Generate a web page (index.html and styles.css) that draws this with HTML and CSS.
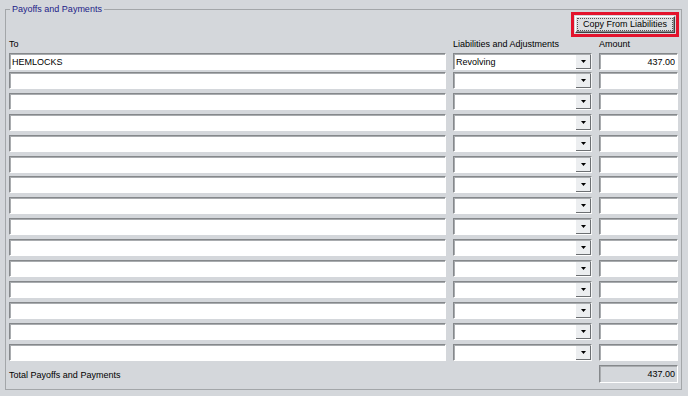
FILE: index.html
```html
<!DOCTYPE html>
<html>
<head>
    <title>Payoffs and Payments</title>
    <link rel="stylesheet" href="styles.css">
</head>
<body>
    <fieldset class="group">
        <legend>Payoffs and Payments</legend>

        <div class="toolbar">
            <button type="button" class="copy-btn"><span>Copy From Liabilities</span></button>
        </div>

        <div class="cols head">
            <div>To</div>
            <div>Liabilities and Adjustments</div>
            <div>Amount</div>
        </div>

        <div class="rows">
            <div class="cols row first">
                <input class="field" type="text" value="HEMLOCKS">
                <div class="field combo"><span class="val">Revolving</span><span class="arrow"><svg width="5" height="3" viewBox="0 0 5 3"><polygon points="0,0 5,0 2.5,3" fill="#000"/></svg></span></div>
                <input class="field amount" type="text" value="437.00">
            </div>
            <div class="cols row">
                <input class="field" type="text">
                <div class="field combo"><span class="val"></span><span class="arrow"><svg width="5" height="3" viewBox="0 0 5 3"><polygon points="0,0 5,0 2.5,3" fill="#000"/></svg></span></div>
                <input class="field amount" type="text">
            </div>
            <div class="cols row">
                <input class="field" type="text">
                <div class="field combo"><span class="val"></span><span class="arrow"><svg width="5" height="3" viewBox="0 0 5 3"><polygon points="0,0 5,0 2.5,3" fill="#000"/></svg></span></div>
                <input class="field amount" type="text">
            </div>
            <div class="cols row">
                <input class="field" type="text">
                <div class="field combo"><span class="val"></span><span class="arrow"><svg width="5" height="3" viewBox="0 0 5 3"><polygon points="0,0 5,0 2.5,3" fill="#000"/></svg></span></div>
                <input class="field amount" type="text">
            </div>
            <div class="cols row">
                <input class="field" type="text">
                <div class="field combo"><span class="val"></span><span class="arrow"><svg width="5" height="3" viewBox="0 0 5 3"><polygon points="0,0 5,0 2.5,3" fill="#000"/></svg></span></div>
                <input class="field amount" type="text">
            </div>
            <div class="cols row">
                <input class="field" type="text">
                <div class="field combo"><span class="val"></span><span class="arrow"><svg width="5" height="3" viewBox="0 0 5 3"><polygon points="0,0 5,0 2.5,3" fill="#000"/></svg></span></div>
                <input class="field amount" type="text">
            </div>
            <div class="cols row">
                <input class="field" type="text">
                <div class="field combo"><span class="val"></span><span class="arrow"><svg width="5" height="3" viewBox="0 0 5 3"><polygon points="0,0 5,0 2.5,3" fill="#000"/></svg></span></div>
                <input class="field amount" type="text">
            </div>
            <div class="cols row">
                <input class="field" type="text">
                <div class="field combo"><span class="val"></span><span class="arrow"><svg width="5" height="3" viewBox="0 0 5 3"><polygon points="0,0 5,0 2.5,3" fill="#000"/></svg></span></div>
                <input class="field amount" type="text">
            </div>
            <div class="cols row">
                <input class="field" type="text">
                <div class="field combo"><span class="val"></span><span class="arrow"><svg width="5" height="3" viewBox="0 0 5 3"><polygon points="0,0 5,0 2.5,3" fill="#000"/></svg></span></div>
                <input class="field amount" type="text">
            </div>
            <div class="cols row">
                <input class="field" type="text">
                <div class="field combo"><span class="val"></span><span class="arrow"><svg width="5" height="3" viewBox="0 0 5 3"><polygon points="0,0 5,0 2.5,3" fill="#000"/></svg></span></div>
                <input class="field amount" type="text">
            </div>
            <div class="cols row">
                <input class="field" type="text">
                <div class="field combo"><span class="val"></span><span class="arrow"><svg width="5" height="3" viewBox="0 0 5 3"><polygon points="0,0 5,0 2.5,3" fill="#000"/></svg></span></div>
                <input class="field amount" type="text">
            </div>
            <div class="cols row">
                <input class="field" type="text">
                <div class="field combo"><span class="val"></span><span class="arrow"><svg width="5" height="3" viewBox="0 0 5 3"><polygon points="0,0 5,0 2.5,3" fill="#000"/></svg></span></div>
                <input class="field amount" type="text">
            </div>
            <div class="cols row">
                <input class="field" type="text">
                <div class="field combo"><span class="val"></span><span class="arrow"><svg width="5" height="3" viewBox="0 0 5 3"><polygon points="0,0 5,0 2.5,3" fill="#000"/></svg></span></div>
                <input class="field amount" type="text">
            </div>
            <div class="cols row">
                <input class="field" type="text">
                <div class="field combo"><span class="val"></span><span class="arrow"><svg width="5" height="3" viewBox="0 0 5 3"><polygon points="0,0 5,0 2.5,3" fill="#000"/></svg></span></div>
                <input class="field amount" type="text">
            </div>
            <div class="cols row">
                <input class="field" type="text">
                <div class="field combo"><span class="val"></span><span class="arrow"><svg width="5" height="3" viewBox="0 0 5 3"><polygon points="0,0 5,0 2.5,3" fill="#000"/></svg></span></div>
                <input class="field amount" type="text">
            </div>
        </div>

        <div class="cols total">
            <div class="total-label">Total Payoffs and Payments</div>
            <div></div>
            <div class="field amount readonly">437.00</div>
        </div>
    </fieldset>
</body>
</html>
```

FILE: styles.css
```css
/* Global styles */
body {
    margin: 0;
    background-color: #d4d7db;
    font-family: "Liberation Sans", Arial, sans-serif;
    font-size: 9px;
    color: #000;
}

/* Group box */
.group {
    margin: 3px 6px 0 5px;
    padding: 0 2px 6px 3px;
    border: 1px solid #a3a6a9;
    min-width: 0;
}

.group legend {
    margin-left: 1px;
    padding: 0 2px;
    line-height: 13px;
    color: #1c2288;
}

/* Copy button */
.toolbar {
    display: flex;
    justify-content: flex-end;
    height: 17px;
    padding-right: 4px;
}

.copy-btn {
    width: 100px;
    height: 17px;
    padding: 1px;
    font: inherit;
    color: #000;
    background-color: #dcdee1;
    border: 1px solid;
    border-color: #fff #404040 #404040 #fff;
    box-shadow: inset -1px -1px #8a8c8f;
    outline: 3px solid #e3132c;
    outline-offset: 1px;
}

.copy-btn span {
    display: block;
    line-height: 11px;
    border: 1px dotted #555;
}

/* Column layout */
.cols {
    display: grid;
    grid-template-columns: 437px 139px 79px;
    column-gap: 7px;
}

.head {
    margin-top: 5px;
    margin-bottom: 3px;
    line-height: 12px;
}

.rows {
    display: flex;
    flex-direction: column;
    gap: 3.9px;
}

.row.first {
    margin-bottom: -1.9px;
}

/* Sunken fields */
.field {
    box-sizing: border-box;
    height: 17px;
    margin: 0;
    padding: 0 2px;
    font: inherit;
    color: #000;
    background-color: #fff;
    border: 1px solid;
    border-color: #85888b #fff #fff #85888b;
    box-shadow: inset 1px 1px #a9acaf;
    outline: none;
}

.amount {
    text-align: right;
}

.combo {
    display: flex;
    padding: 0 0 0 2px;
    border-right-color: #f4f5f6;
}

.combo .val {
    flex: 1;
    line-height: 14px;
    padding-top: 1px;
}

.combo .arrow {
    display: flex;
    align-items: center;
    justify-content: center;
    width: 15px;
    margin: 1px 0 0;
    background-color: #eceef0;
    border-right: 1px solid #6c6f72;
    border-bottom: 1px solid #6c6f72;
    box-sizing: border-box;
}

/* Total row */
.total {
    margin-top: 4.4px;
    align-items: center;
}

.total-label {
    padding-top: 2px;
}

.readonly {
    height: 18px;
    background-color: #d4d7db;
    line-height: 16px;
}
```
